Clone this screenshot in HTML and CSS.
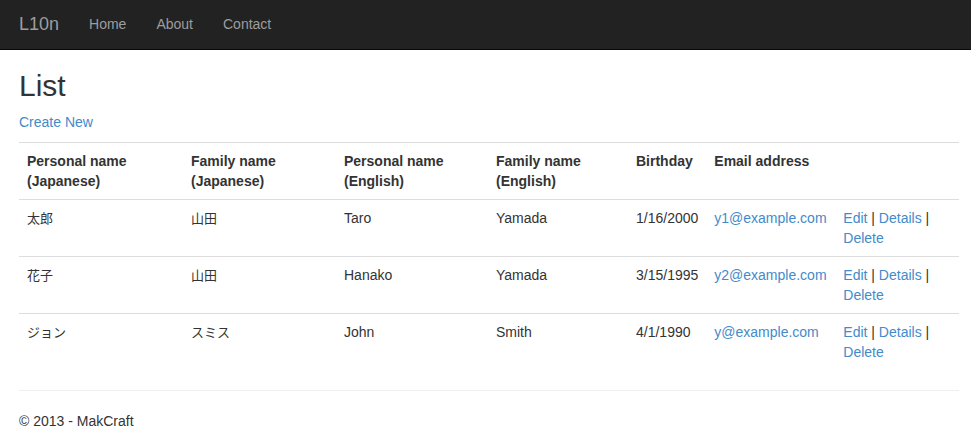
FILE: index.html
```html
<!DOCTYPE html>
<html lang="ja">
<head>
    <meta charset="UTF-8">
    <meta name="viewport" content="width=device-width, initial-scale=1.0">
    <title>List - L10n</title>
    <link rel="stylesheet" href="styles.css">
</head>
<body>
    <div class="navbar">
        <div class="navbar-inner">
            <a class="navbar-brand" href="#">L10n</a>
            <ul class="nav">
                <li><a href="#">Home</a></li>
                <li><a href="#">About</a></li>
                <li><a href="#">Contact</a></li>
            </ul>
        </div>
    </div>

    <div class="body-content">
        <h2>List</h2>
        <p><a href="#">Create New</a></p>

        <table class="table">
            <colgroup>
                <col class="col-pj">
                <col class="col-fj">
                <col class="col-pe">
                <col class="col-fe">
                <col class="col-bd">
                <col class="col-em">
                <col>
            </colgroup>
            <tr>
                <th>Personal name<br>(Japanese)</th>
                <th>Family name<br>(Japanese)</th>
                <th>Personal name<br>(English)</th>
                <th>Family name<br>(English)</th>
                <th>Birthday</th>
                <th>Email address</th>
                <th></th>
            </tr>
            <tr>
                <td class="ja">太郎</td>
                <td class="ja">山田</td>
                <td>Taro</td>
                <td>Yamada</td>
                <td>1/16/2000</td>
                <td><a href="#">y1@example.com</a></td>
                <td><a href="#">Edit</a> | <a href="#">Details</a> | <a href="#">Delete</a></td>
            </tr>
            <tr>
                <td class="ja">花子</td>
                <td class="ja">山田</td>
                <td>Hanako</td>
                <td>Yamada</td>
                <td>3/15/1995</td>
                <td><a href="#">y2@example.com</a></td>
                <td><a href="#">Edit</a> | <a href="#">Details</a> | <a href="#">Delete</a></td>
            </tr>
            <tr>
                <td class="ja">ジョン</td>
                <td class="ja">スミス</td>
                <td>John</td>
                <td>Smith</td>
                <td>4/1/1990</td>
                <td><a href="#">y@example.com</a></td>
                <td><a href="#">Edit</a> | <a href="#">Details</a> | <a href="#">Delete</a></td>
            </tr>
        </table>

        <hr>
        <footer>
            <p>&copy; 2013 - MakCraft</p>
        </footer>
    </div>
</body>
</html>
```

FILE: styles.css
```css
body {
    margin: 0;
    font-family: "Liberation Sans", Arial, sans-serif;
    font-size: 14px;
    line-height: 20px;
    color: #333;
    background: #fff;
}

a {
    color: #428bca;
    text-decoration: none;
}

.navbar {
    height: 49px;
    background: #222;
    border-bottom: 1px solid #080808;
}

.navbar-inner {
    display: flex;
    padding-left: 4px;
}

.navbar-brand {
    padding: 14px 15px 15px;
    font-size: 18px;
    line-height: 20px;
    color: #9d9d9d;
}

.nav {
    display: flex;
    margin: 0;
    padding: 0;
    list-style: none;
}

.nav a {
    display: block;
    padding: 14px 15px 15px;
    line-height: 20px;
    color: #9d9d9d;
}

.body-content {
    padding: 0 12px 0 19px;
}

h2 {
    margin: 20px 0 10px;
    font-size: 30px;
    font-weight: 500;
    line-height: 32px;
}

p {
    margin: 0 0 10px;
}

.table {
    width: 100%;
    border-collapse: collapse;
    margin-bottom: 20px;
}

.table th,
.table td {
    padding: 8px;
    text-align: left;
    vertical-align: top;
    border-top: 1px solid #ddd;
}

.table th {
    font-weight: bold;
}

.ja {
    font-family: "Noto Sans CJK JP", sans-serif;
    font-size: 13px;
}

.col-pj { width: 164px; }
.col-fj { width: 153px; }
.col-pe { width: 152px; }
.col-fe { width: 140px; }
.col-bd { width: 78px; }
.col-em { width: 129px; }

hr {
    margin: 20px 0;
    border: 0;
    border-top: 1px solid #eee;
}
```
